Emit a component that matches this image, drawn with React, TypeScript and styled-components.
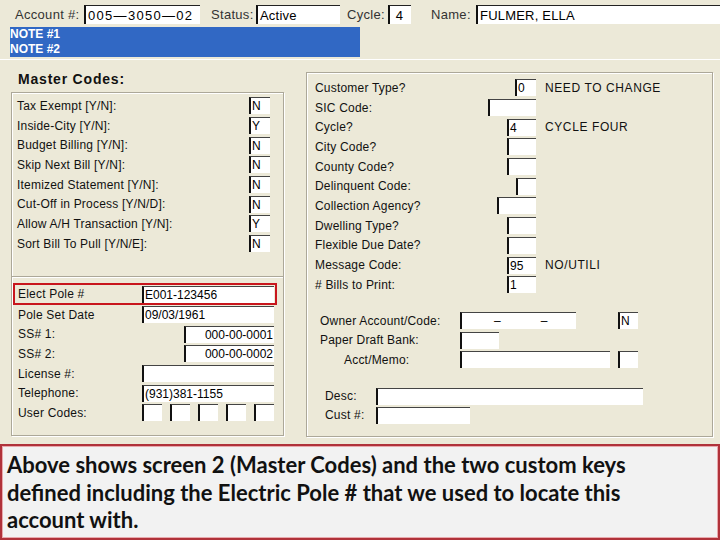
import styled, { createGlobalStyle } from 'styled-components';

const GlobalStyle = createGlobalStyle`
  html, body {
    margin: 0;
    padding: 0;
    background: #ece9d8;
  }
  body {
    width: 720px;
    height: 540px;
    overflow: hidden;
    font-family: 'Liberation Sans', Arial, sans-serif;
  }
`;

const Colors = {
  beige: '#ece9d8',
  etch: '#aca899',
  blue: '#3168c4',
  red: '#c8161d',
};

const masterCodes = [
  { label: 'Tax Exempt [Y/N]:', value: 'N' },
  { label: 'Inside-City [Y/N]:', value: 'Y' },
  { label: 'Budget Billing [Y/N]:', value: 'N' },
  { label: 'Skip Next Bill [Y/N]:', value: 'N' },
  { label: 'Itemized Statement [Y/N]:', value: 'N' },
  { label: 'Cut-Off in Process [Y/N/D]:', value: 'N' },
  { label: 'Allow A/H Transaction [Y/N]:', value: 'Y' },
  { label: 'Sort Bill To Pull [Y/N/E]:', value: 'N' },
];

const codes = [
  { label: 'Customer Type?', value: '0', width: 21, note: 'NEED TO CHANGE' },
  { label: 'SIC Code:', value: '', width: 48 },
  { label: 'Cycle?', value: '4', width: 29, note: 'CYCLE FOUR' },
  { label: 'City Code?', value: '', width: 29 },
  { label: 'County Code?', value: '', width: 29 },
  { label: 'Delinquent Code:', value: '', width: 20 },
  { label: 'Collection Agency?', value: '', width: 39 },
  { label: 'Dwelling Type?', value: '', width: 29 },
  { label: 'Flexible Due Date?', value: '', width: 29 },
  { label: 'Message Code:', value: '95', width: 29, note: 'NO/UTILI' },
  { label: '# Bills to Print:', value: '1', width: 29 },
];

export default function App() {
  return (
    <>
      <GlobalStyle />
      <Page>
        <Form>
          <TopBar>
            <TopLabel $w={69}>Account #:</TopLabel>
            <TopField $w={116} $spaced>005—3050—02</TopField>
            <TopLabel $w={45} $ml={11}>Status:</TopLabel>
            <TopField $w={84}>Active</TopField>
            <TopLabel $w={41} $ml={7}>Cycle:</TopLabel>
            <TopField $w={23}>&nbsp;4</TopField>
            <TopLabel $w={45} $ml={20}>Name:</TopLabel>
            <TopField $grow>FULMER, ELLA</TopField>
          </TopBar>

          <NoteBar>
            <NoteLine>NOTE #1</NoteLine>
            <NoteLine>NOTE #2</NoteLine>
          </NoteBar>

          <Body>
            <LeftColumn>
              <Title>Master Codes:</Title>
              <GroupBox $h={344}>
                <FlagSection>
                  {masterCodes.map((row) => (
                    <FlagRow key={row.label}>
                      <Label>{row.label}</Label>
                      <Field $w={21}>{row.value}</Field>
                    </FlagRow>
                  ))}
                </FlagSection>
                <KeySection>
                  <KeyRow $highlight>
                    <Label>Elect Pole #</Label>
                    <Field>E001-123456</Field>
                  </KeyRow>
                  <KeyRow>
                    <Label>Pole Set Date</Label>
                    <Field>09/03/1961</Field>
                  </KeyRow>
                  <KeyRow>
                    <Label>SS# 1:</Label>
                    <Field $w={90} $right>000-00-0001</Field>
                  </KeyRow>
                  <KeyRow>
                    <Label>SS# 2:</Label>
                    <Field $w={90} $right>000-00-0002</Field>
                  </KeyRow>
                  <KeyRow>
                    <Label>License #:</Label>
                    <Field />
                  </KeyRow>
                  <KeyRow>
                    <Label>Telephone:</Label>
                    <Field>(931)381-1155</Field>
                  </KeyRow>
                  <KeyRow>
                    <Label>User Codes:</Label>
                    <UserCodes>
                      {[0, 1, 2, 3, 4].map((i) => (
                        <Field key={i} $w={20} />
                      ))}
                    </UserCodes>
                  </KeyRow>
                </KeySection>
              </GroupBox>
            </LeftColumn>

            <GroupBox $h={365} $w={407} $mt={12}>
              <CodeSection>
                {codes.map((row) => (
                  <CodeRow key={row.label}>
                    <Label>{row.label}</Label>
                    <Field $w={row.width}>{row.value}</Field>
                    <Note>{row.note}</Note>
                  </CodeRow>
                ))}
              </CodeSection>

              <OwnerSection>
                <OwnerRow>
                  <Label>Owner Account/Code:</Label>
                  <FieldGroup>
                    <Field $w={116}>
                      <Dash>–</Dash>
                      <Dash>–</Dash>
                    </Field>
                    <Field $w={20} $ml={42}>N</Field>
                  </FieldGroup>
                </OwnerRow>
                <OwnerRow>
                  <Label>Paper Draft Bank:</Label>
                  <FieldGroup>
                    <Field $w={39} />
                  </FieldGroup>
                </OwnerRow>
                <OwnerRow>
                  <Label $indent={24}>Acct/Memo:</Label>
                  <FieldGroup>
                    <Field $w={150} />
                    <Field $w={20} $ml={8} />
                  </FieldGroup>
                </OwnerRow>
              </OwnerSection>

              <DescSection>
                <DescRow>
                  <Label>Desc:</Label>
                  <Field $w={267} />
                </DescRow>
                <DescRow>
                  <Label>Cust #:</Label>
                  <Field $w={94} />
                </DescRow>
              </DescSection>
            </GroupBox>
          </Body>
        </Form>

        <Caption>
          Above shows screen 2 (Master Codes) and the two custom keys
          <br />
          defined including the Electric Pole # that we used to locate this
          <br />
          account with.
        </Caption>
      </Page>
    </>
  );
}

const Page = styled.div`
  width: 720px;
  height: 540px;
  display: flex;
  flex-direction: column;
`;

const Form = styled.div`
  height: 444px;
  background: ${Colors.beige};
  display: flex;
  flex-direction: column;
`;

const TopBar = styled.div`
  height: 25px;
  padding: 2px 0 0 15px;
  display: flex;
  align-items: center;
  font-size: 13px;
  letter-spacing: 0.3px;
  color: #111;
`;

const TopLabel = styled.span<{ $w: number; $ml?: number }>`
  width: ${(p) => p.$w}px;
  margin-left: ${(p) => p.$ml ?? 0}px;
  flex-shrink: 0;
  color: #333;
`;

const TopField = styled.div<{ $w?: number; $grow?: boolean; $spaced?: boolean }>`
  ${(p) => (p.$grow ? 'flex: 1;' : `width: ${p.$w}px;`)}
  height: 19px;
  box-sizing: border-box;
  background: #fff;
  border-top: 1px solid #222;
  border-left: 2px solid #111;
  padding-left: 2px;
  display: flex;
  align-items: center;
  font-size: 13px;
  color: #000;
  white-space: pre;
  overflow: hidden;
  letter-spacing: ${(p) => (p.$spaced ? '1.3px' : '0.2px')};
`;

const NoteBar = styled.div`
  width: 350px;
  height: 30px;
  margin-left: 10px;
  background: ${Colors.blue};
  display: flex;
  flex-direction: column;
  justify-content: center;
`;

const NoteLine = styled.div`
  color: #fff;
  font-weight: bold;
  font-size: 12px;
  line-height: 15px;
`;

const Body = styled.div`
  flex: 1;
  margin-top: 2px;
  border-top: 1px solid #fff;
  display: flex;
  align-items: flex-start;
  padding-left: 11px;
  gap: 22px;
`;

const LeftColumn = styled.div`
  width: 273px;
  display: flex;
  flex-direction: column;
`;

const Title = styled.div`
  margin-top: 12px;
  height: 20px;
  padding-left: 7px;
  font-size: 14px;
  font-weight: bold;
  letter-spacing: 0.8px;
  line-height: 14px;
  color: #111;
`;

const GroupBox = styled.div<{ $h: number; $w?: number; $mt?: number }>`
  box-sizing: border-box;
  height: ${(p) => p.$h}px;
  width: ${(p) => (p.$w ? `${p.$w}px` : '100%')};
  margin-top: ${(p) => p.$mt ?? 0}px;
  border: 1px solid ${Colors.etch};
  box-shadow: inset 1px 1px 0 #fff, 1px 1px 0 #fff;
  display: flex;
  flex-direction: column;
`;

const Label = styled.span<{ $indent?: number }>`
  font-size: 12px;
  color: #111;
  letter-spacing: 0.2px;
  white-space: nowrap;
  padding-left: ${(p) => p.$indent ?? 0}px;
`;

const Field = styled.div<{ $w?: number; $right?: boolean; $ml?: number }>`
  box-sizing: border-box;
  width: ${(p) => (p.$w ? `${p.$w}px` : '100%')};
  height: 17px;
  margin-left: ${(p) => p.$ml ?? 0}px;
  justify-self: ${(p) => (p.$w ? 'end' : 'stretch')};
  background: #fff;
  border-top: 1px solid #444;
  border-left: 2px solid #111;
  padding: 0 1px 0 1px;
  display: flex;
  align-items: center;
  justify-content: ${(p) => (p.$right ? 'flex-end' : 'flex-start')};
  font-size: 12px;
  color: #000;
  white-space: nowrap;
  overflow: hidden;
`;

const FlagSection = styled.div`
  height: 184px;
  box-sizing: border-box;
  padding: 3px 13px 0 5px;
  border-bottom: 1px solid ${Colors.etch};
  box-shadow: 0 1px 0 #fff;
`;

const FlagRow = styled.div`
  height: 19.7px;
  display: grid;
  grid-template-columns: 1fr 21px;
  align-items: center;
`;

const KeySection = styled.div`
  padding: 6px 9px 0 6px;
  display: flex;
  flex-direction: column;
`;

const KeyRow = styled.div<{ $highlight?: boolean }>`
  display: grid;
  grid-template-columns: 124px 1fr;
  align-items: center;
  ${(p) =>
    p.$highlight
      ? `
    height: 22px;
    box-sizing: border-box;
    border: 2px solid ${Colors.red};
    margin: 0 -3px 0 -5px;
    padding: 0 1px 0 3px;
  `
      : `
    height: 19.6px;
  `}
`;

const UserCodes = styled.div`
  display: flex;
  gap: 8px;
`;

const CodeSection = styled.div`
  padding: 5px 0 0 8px;
`;

const CodeRow = styled.div`
  height: 19.7px;
  display: grid;
  grid-template-columns: 221px 1fr;
  column-gap: 9px;
  align-items: center;
  grid-template-areas: 'main note';

  & > ${Label} {
    grid-area: main;
  }
  & > ${Field} {
    grid-area: main;
  }
`;

const Note = styled.span`
  grid-area: note;
  font-size: 12px;
  letter-spacing: 0.6px;
  color: #111;
`;

const OwnerSection = styled.div`
  margin-top: 16.5px;
  padding-left: 13px;
`;

const OwnerRow = styled.div`
  height: 19.5px;
  display: grid;
  grid-template-columns: 140px 1fr;
  align-items: center;
`;

const FieldGroup = styled.div`
  display: flex;
  align-items: center;
`;

const Dash = styled.span`
  margin-left: 31px;
  & + & {
    margin-left: 40px;
  }
`;

const DescSection = styled.div`
  margin-top: 17px;
  padding-left: 18px;
`;

const DescRow = styled.div`
  height: 19px;
  display: grid;
  grid-template-columns: 51px 1fr;
  align-items: center;

  & > ${Field} {
    justify-self: start;
  }
`;

const Caption = styled.div`
  flex: 1;
  box-sizing: border-box;
  background: #f2f2f2;
  border: 2px solid #b0323a;
  box-shadow: inset 0 0 0 1px #e8a9ad;
  padding: 5px 0 0 5px;
  font-family: Lato, 'Open Sans', sans-serif;
  font-weight: bold;
  font-size: 22px;
  line-height: 27.5px;
  color: #111;
  white-space: nowrap;
`;
